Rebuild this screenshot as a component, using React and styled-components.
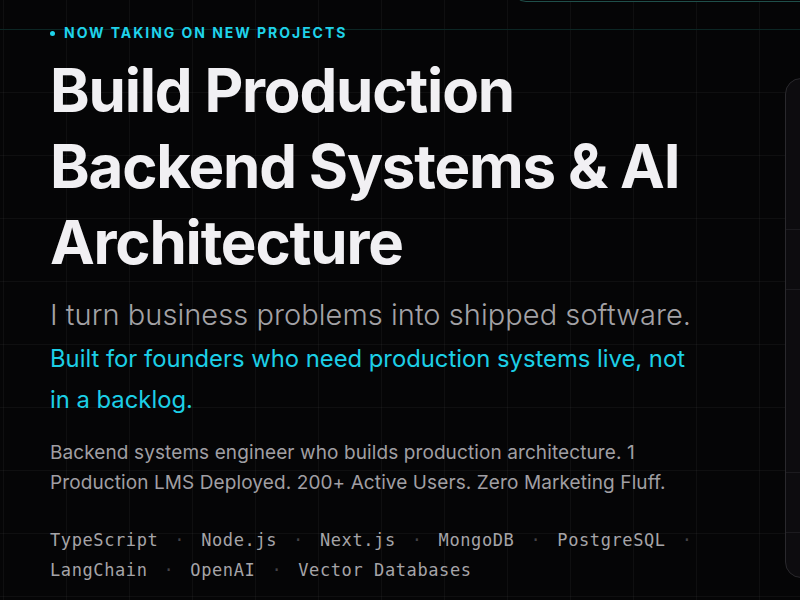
import React from 'react'
import styled, { createGlobalStyle } from 'styled-components'

const GlobalStyle = createGlobalStyle`
  html, body {
    margin: 0;
    padding: 0;
    background: #050506;
  }
  * { box-sizing: border-box; }
`

const Page = styled.div`
  position: relative;
  width: 800px;
  height: 600px;
  overflow: hidden;
  background-color: #050506;
  background-image:
    linear-gradient(to right, rgba(255, 255, 255, 0.04) 1px, transparent 1px),
    linear-gradient(to bottom, rgba(255, 255, 255, 0.04) 1px, transparent 1px);
  background-size: 63px 63px;
  background-position: 3px 29px;
  font-family: Inter, "Noto Sans", sans-serif;
`

const TopRule = styled.div`
  height: 1px;
  margin-top: 29px;
  background: #0c2624;
`

const NavShell = styled.div`
  position: fixed;
  top: -60px;
  left: 512px;
  width: 420px;
  height: 62px;
  border: 1px solid #1f4f4a;
  border-radius: 14px;
  background: #050506;
`

const Hero = styled.section`
  display: flex;
  gap: 85px;
  margin-top: -30px;
  padding-left: 50px;
`

const Copy = styled.div`
  flex: 0 0 650px;
  padding-top: 25px;
`

const Eyebrow = styled.div`
  display: flex;
  align-items: center;
  gap: 9px;
  height: 16px;
  color: #1fd3ea;
  font-size: 14px;
  font-weight: 700;
  letter-spacing: 0.14em;
  line-height: 16px;
`

const Dot = styled.span`
  width: 5px;
  height: 5px;
  border-radius: 50%;
  background: #1fd3ea;
`

const Title = styled.h1`
  margin: 11px 0 0;
  color: #f1f0f3;
  font-size: 60px;
  font-weight: 700;
  line-height: 76px;
  letter-spacing: -0.02em;
`

const Lead = styled.p`
  margin: 17px 0 0;
  color: #a3a2a6;
  font-size: 29px;
  font-weight: 300;
  line-height: 36px;
  letter-spacing: 0.05px;
  white-space: nowrap;
`

const Accent = styled.p`
  margin: 5px 0 0;
  color: #1ccfe6;
  font-size: 23.8px;
  font-weight: 400;
  line-height: 41px;
`

const Body = styled.p`
  margin: 18px 0 0;
  color: #a09fa3;
  font-size: 19px;
  line-height: 30px;
  letter-spacing: 0.1px;
`

const Stack = styled.ul`
  display: flex;
  flex-wrap: wrap;
  column-gap: 16px;
  margin: 27px 0 0;
  padding: 0;
  list-style: none;
  color: #a5a4a8;
  font-family: "DejaVu Sans Mono", "Liberation Mono", monospace;
  font-size: 17px;
  letter-spacing: 0.6px;
  line-height: 30px;
`

const StackItem = styled.li`
  white-space: nowrap;
`

const Sep = styled.span`
  margin-left: 16px;
  color: #434247;
`

const Card = styled.aside`
  flex: 0 0 420px;
  height: 500px;
  margin-top: 78px;
  border: 1px solid #2a292d;
  border-radius: 16px;
  background: #0d0c0f;
  overflow: hidden;
`

const CardRow = styled.div`
  height: ${p => p.h}px;
  border-bottom: 1px solid ${p => (p.last ? 'transparent' : '#1c1b1f')};
`

const tech = ['TypeScript', 'Node.js', 'Next.js', 'MongoDB', 'PostgreSQL', 'LangChain', 'OpenAI', 'Vector Databases']

export default function App() {
  return (
    <Page>
      <GlobalStyle />
      <NavShell />
      <TopRule />
      <Hero>
        <Copy>
          <Eyebrow>
            <Dot />
            NOW TAKING ON NEW PROJECTS
          </Eyebrow>
          <Title>
            Build Production
            <br />
            Backend Systems &amp; AI
            <br />
            Architecture
          </Title>
          <Lead>I turn business problems into shipped software.</Lead>
          <Accent>Built for founders who need production systems live, not in a backlog.</Accent>
          <Body>
            Backend systems engineer who builds production architecture. 1 Production LMS Deployed. 200+ Active Users. Zero
            Marketing Fluff.
          </Body>
          <Stack>
            {tech.map((t, i) => (
              <StackItem key={t}>
                {t}
                {i < tech.length - 1 && <Sep>·</Sep>}
              </StackItem>
            ))}
          </Stack>
        </Copy>
        <Card>
          <CardRow h={151} />
          <CardRow h={60} />
          <CardRow h={183} />
          <CardRow h={60} />
          <CardRow h={40} last />
        </Card>
      </Hero>
    </Page>
  )
}
